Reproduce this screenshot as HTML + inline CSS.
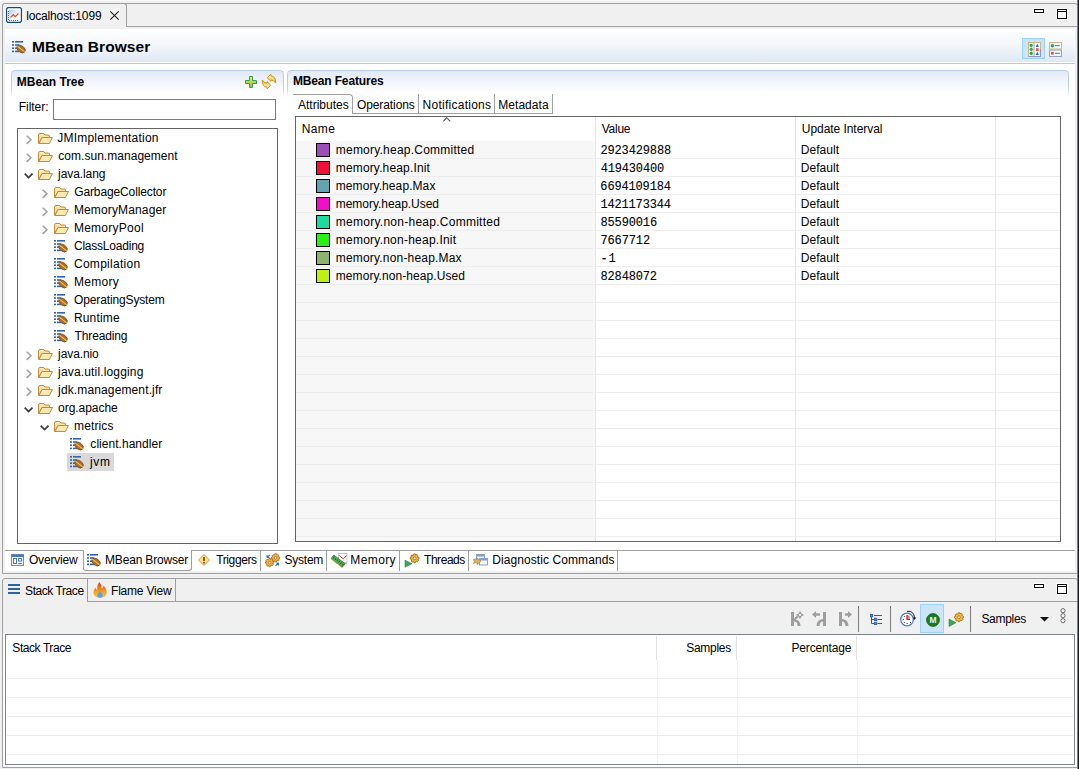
<!DOCTYPE html>
<html lang="en"><head><meta charset="utf-8"><title>JDK Mission Control - MBean Browser</title>
<style>
html,body{margin:0;padding:0}
body{width:1079px;height:769px;overflow:hidden;background:#f0f0f0;font-family:"Liberation Sans", sans-serif;font-size:12px;color:#000;position:relative}
.a{position:absolute;box-sizing:border-box;display:block}
.t{white-space:pre}
svg{overflow:visible}
</style></head><body>
<div class="a" style="left:0px;top:0px;width:1077px;height:1px;background:#fafafa"></div>
<div class="a" style="left:2px;top:3px;width:1076px;height:571px;border:1px solid #a0a0a0;border-radius:3px 3px 0 0;background:#f0f0f0"></div>
<div class="a" style="left:126px;top:26px;width:951px;height:1px;background:#a0a0a0"></div>
<div class="a" style="left:2px;top:3px;width:125px;height:24px;border:1px solid #a0a0a0;border-bottom:none;border-radius:3px 3px 0 0;background:#f1f1f1"></div>
<svg class="a" style="left:6px;top:7px" width="16" height="16" viewBox="0 0 16 16"><defs><linearGradient id="ci" x1="0" y1="0" x2="1" y2="1"><stop offset="0" stop-color="#a9cdf5"/><stop offset="0.6" stop-color="#ffffff"/></linearGradient></defs><path d="M1.8 0.6 H14.2 L15.4 1.8 V14.2 L14.2 15.4 H1.8 L0.6 14.2 V1.8 Z" fill="#fff" stroke="#0d4a8a" stroke-width="1.2"/><rect x="3" y="3" width="10.5" height="10.5" fill="url(#ci)"/><path d="M4.5 10.5 L7.3 7.6 L9.3 9.6 L12.5 6.5" fill="none" stroke="#ff3c14" stroke-width="1.25"/><path d="M2.5 4 V13" stroke="#2f7f88" stroke-width="1.1" stroke-dasharray="1 1"/><path d="M3 13.5 H13" stroke="#2f7f88" stroke-width="1" stroke-dasharray="1 1"/></svg>
<svg class="a" style="left:110px;top:11px" width="9" height="9" viewBox="0 0 9 9"><path d="M0.3 0.3 L8.7 8.7 M8.7 0.3 L0.3 8.7" stroke="#222" stroke-width="1.1" fill="none"/></svg>
<div class="a" style="left:1033px;top:8px;width:12px;height:6px;background:#fff"></div>
<div class="a" style="left:1034px;top:9px;width:10px;height:4px;border:1px solid #000;background:#fff"></div>
<div class="a" style="left:1056px;top:8px;width:12px;height:12px;background:#fff"></div>
<div class="a" style="left:1057px;top:9px;width:10px;height:10px;border:1px solid #000;background:#fff"></div>
<div class="a" style="left:1057px;top:11px;width:10px;height:1px;background:#000"></div>
<div class="a" style="left:5px;top:29px;width:1070px;height:542px;background:#fff"></div>
<div class="a" style="left:5px;top:29px;width:1070px;height:33px;background:linear-gradient(#ffffff 0%,#f4f7fc 45%,#e0e8f4 100%)"></div>
<div class="a" style="left:5px;top:63px;width:1070px;height:1px;background:#b4c9e2"></div>
<svg class="a" style="left:12px;top:41px" width="14" height="13" viewBox="0 0 14 13"><g fill="#2f66ad"><rect x="0" y="0" width="2" height="1.6"/><rect x="0" y="3.2" width="2" height="1.6"/><rect x="0" y="6.4" width="2" height="1.6"/><rect x="0" y="9.6" width="2" height="1.6"/><rect x="3" y="0" width="8" height="1.6"/><rect x="3" y="3.2" width="4" height="1.6"/><rect x="3" y="6.4" width="3" height="1.6"/><rect x="3" y="9.6" width="4" height="1.6"/></g><g transform="translate(9 8) rotate(38)"><ellipse cx="0" cy="0" rx="4.7" ry="3.2" fill="#b06c2c" stroke="#7d4a1c" stroke-width="0.8"/><path d="M-4.6 0 H4.6" stroke="#f2d24a" stroke-width="1"/></g></svg>
<div class="a" style="left:1022px;top:38px;width:23px;height:21px;background:#cce4f7;border:1px solid #99d1ff"></div>
<div class="a" style="left:11px;top:70px;width:273px;height:28px;border:1px solid #b8cde8;border-bottom:none;border-radius:4px 4px 0 0;background:linear-gradient(#e1e9f6 0%,#f3f6fb 45%,#ffffff 85%);-webkit-mask-image:linear-gradient(#000 55%,transparent 100%)"></div>
<div class="a" style="left:287px;top:70px;width:782px;height:28px;border:1px solid #b8cde8;border-bottom:none;border-radius:4px 4px 0 0;background:linear-gradient(#e1e9f6 0%,#f3f6fb 45%,#ffffff 85%);-webkit-mask-image:linear-gradient(#000 55%,transparent 100%)"></div>
<div class="a" style="left:53px;top:99px;width:223px;height:21px;border:1px solid #7a7a7a;background:#fff"></div>
<div class="a" style="left:17px;top:128px;width:261px;height:416px;border:1px solid #646464;background:#fff"></div>
<svg class="a" style="left:26px;top:135px" width="6" height="10" viewBox="0 0 6 10"><path d="M0.7 0.7 L4.9 4.8 L0.7 8.9" fill="none" stroke="#a0a0a0" stroke-width="1.6"/></svg>
<svg class="a" style="left:38px;top:133px" width="15" height="11" viewBox="0 0 15 11"><path d="M0.5 10.5 V2 Q0.5 0.5 2 0.5 H5 Q6.3 0.5 6.8 2 H10.5 Q11.5 2 11.5 3 V4.5 H4 L0.5 10.5 Z" fill="#fbe3a4" stroke="#c48a3a"/><path d="M1.5 1.8 H5.5" stroke="#fff8e0" stroke-width="1"/><path d="M0.8 10.5 L4 4.5 H14.5 L11.3 10.5 Z" fill="#fce9b4" stroke="#c48a3a" stroke-linejoin="round"/></svg>
<svg class="a" style="left:26px;top:153px" width="6" height="10" viewBox="0 0 6 10"><path d="M0.7 0.7 L4.9 4.8 L0.7 8.9" fill="none" stroke="#a0a0a0" stroke-width="1.6"/></svg>
<svg class="a" style="left:38px;top:151px" width="15" height="11" viewBox="0 0 15 11"><path d="M0.5 10.5 V2 Q0.5 0.5 2 0.5 H5 Q6.3 0.5 6.8 2 H10.5 Q11.5 2 11.5 3 V4.5 H4 L0.5 10.5 Z" fill="#fbe3a4" stroke="#c48a3a"/><path d="M1.5 1.8 H5.5" stroke="#fff8e0" stroke-width="1"/><path d="M0.8 10.5 L4 4.5 H14.5 L11.3 10.5 Z" fill="#fce9b4" stroke="#c48a3a" stroke-linejoin="round"/></svg>
<svg class="a" style="left:24px;top:173px" width="10" height="6" viewBox="0 0 10 6"><path d="M0.7 0.7 L4.6 4.6 L8.5 0.7" fill="none" stroke="#3a3a3a" stroke-width="1.7"/></svg>
<svg class="a" style="left:38px;top:169px" width="15" height="11" viewBox="0 0 15 11"><path d="M0.5 10.5 V2 Q0.5 0.5 2 0.5 H5 Q6.3 0.5 6.8 2 H10.5 Q11.5 2 11.5 3 V4.5 H4 L0.5 10.5 Z" fill="#fbe3a4" stroke="#c48a3a"/><path d="M1.5 1.8 H5.5" stroke="#fff8e0" stroke-width="1"/><path d="M0.8 10.5 L4 4.5 H14.5 L11.3 10.5 Z" fill="#fce9b4" stroke="#c48a3a" stroke-linejoin="round"/></svg>
<svg class="a" style="left:42px;top:189px" width="6" height="10" viewBox="0 0 6 10"><path d="M0.7 0.7 L4.9 4.8 L0.7 8.9" fill="none" stroke="#a0a0a0" stroke-width="1.6"/></svg>
<svg class="a" style="left:54px;top:187px" width="15" height="11" viewBox="0 0 15 11"><path d="M0.5 10.5 V2 Q0.5 0.5 2 0.5 H5 Q6.3 0.5 6.8 2 H10.5 Q11.5 2 11.5 3 V4.5 H4 L0.5 10.5 Z" fill="#fbe3a4" stroke="#c48a3a"/><path d="M1.5 1.8 H5.5" stroke="#fff8e0" stroke-width="1"/><path d="M0.8 10.5 L4 4.5 H14.5 L11.3 10.5 Z" fill="#fce9b4" stroke="#c48a3a" stroke-linejoin="round"/></svg>
<svg class="a" style="left:42px;top:207px" width="6" height="10" viewBox="0 0 6 10"><path d="M0.7 0.7 L4.9 4.8 L0.7 8.9" fill="none" stroke="#a0a0a0" stroke-width="1.6"/></svg>
<svg class="a" style="left:54px;top:205px" width="15" height="11" viewBox="0 0 15 11"><path d="M0.5 10.5 V2 Q0.5 0.5 2 0.5 H5 Q6.3 0.5 6.8 2 H10.5 Q11.5 2 11.5 3 V4.5 H4 L0.5 10.5 Z" fill="#fbe3a4" stroke="#c48a3a"/><path d="M1.5 1.8 H5.5" stroke="#fff8e0" stroke-width="1"/><path d="M0.8 10.5 L4 4.5 H14.5 L11.3 10.5 Z" fill="#fce9b4" stroke="#c48a3a" stroke-linejoin="round"/></svg>
<svg class="a" style="left:42px;top:225px" width="6" height="10" viewBox="0 0 6 10"><path d="M0.7 0.7 L4.9 4.8 L0.7 8.9" fill="none" stroke="#a0a0a0" stroke-width="1.6"/></svg>
<svg class="a" style="left:54px;top:223px" width="15" height="11" viewBox="0 0 15 11"><path d="M0.5 10.5 V2 Q0.5 0.5 2 0.5 H5 Q6.3 0.5 6.8 2 H10.5 Q11.5 2 11.5 3 V4.5 H4 L0.5 10.5 Z" fill="#fbe3a4" stroke="#c48a3a"/><path d="M1.5 1.8 H5.5" stroke="#fff8e0" stroke-width="1"/><path d="M0.8 10.5 L4 4.5 H14.5 L11.3 10.5 Z" fill="#fce9b4" stroke="#c48a3a" stroke-linejoin="round"/></svg>
<svg class="a" style="left:54px;top:240px" width="14" height="13" viewBox="0 0 14 13"><g fill="#2f66ad"><rect x="0" y="0" width="2" height="1.6"/><rect x="0" y="3.2" width="2" height="1.6"/><rect x="0" y="6.4" width="2" height="1.6"/><rect x="0" y="9.6" width="2" height="1.6"/><rect x="3" y="0" width="8" height="1.6"/><rect x="3" y="3.2" width="4" height="1.6"/><rect x="3" y="6.4" width="3" height="1.6"/><rect x="3" y="9.6" width="4" height="1.6"/></g><g transform="translate(9 8) rotate(38)"><ellipse cx="0" cy="0" rx="4.7" ry="3.2" fill="#b06c2c" stroke="#7d4a1c" stroke-width="0.8"/><path d="M-4.6 0 H4.6" stroke="#f2d24a" stroke-width="1"/></g></svg>
<svg class="a" style="left:54px;top:258px" width="14" height="13" viewBox="0 0 14 13"><g fill="#2f66ad"><rect x="0" y="0" width="2" height="1.6"/><rect x="0" y="3.2" width="2" height="1.6"/><rect x="0" y="6.4" width="2" height="1.6"/><rect x="0" y="9.6" width="2" height="1.6"/><rect x="3" y="0" width="8" height="1.6"/><rect x="3" y="3.2" width="4" height="1.6"/><rect x="3" y="6.4" width="3" height="1.6"/><rect x="3" y="9.6" width="4" height="1.6"/></g><g transform="translate(9 8) rotate(38)"><ellipse cx="0" cy="0" rx="4.7" ry="3.2" fill="#b06c2c" stroke="#7d4a1c" stroke-width="0.8"/><path d="M-4.6 0 H4.6" stroke="#f2d24a" stroke-width="1"/></g></svg>
<svg class="a" style="left:54px;top:276px" width="14" height="13" viewBox="0 0 14 13"><g fill="#2f66ad"><rect x="0" y="0" width="2" height="1.6"/><rect x="0" y="3.2" width="2" height="1.6"/><rect x="0" y="6.4" width="2" height="1.6"/><rect x="0" y="9.6" width="2" height="1.6"/><rect x="3" y="0" width="8" height="1.6"/><rect x="3" y="3.2" width="4" height="1.6"/><rect x="3" y="6.4" width="3" height="1.6"/><rect x="3" y="9.6" width="4" height="1.6"/></g><g transform="translate(9 8) rotate(38)"><ellipse cx="0" cy="0" rx="4.7" ry="3.2" fill="#b06c2c" stroke="#7d4a1c" stroke-width="0.8"/><path d="M-4.6 0 H4.6" stroke="#f2d24a" stroke-width="1"/></g></svg>
<svg class="a" style="left:54px;top:294px" width="14" height="13" viewBox="0 0 14 13"><g fill="#2f66ad"><rect x="0" y="0" width="2" height="1.6"/><rect x="0" y="3.2" width="2" height="1.6"/><rect x="0" y="6.4" width="2" height="1.6"/><rect x="0" y="9.6" width="2" height="1.6"/><rect x="3" y="0" width="8" height="1.6"/><rect x="3" y="3.2" width="4" height="1.6"/><rect x="3" y="6.4" width="3" height="1.6"/><rect x="3" y="9.6" width="4" height="1.6"/></g><g transform="translate(9 8) rotate(38)"><ellipse cx="0" cy="0" rx="4.7" ry="3.2" fill="#b06c2c" stroke="#7d4a1c" stroke-width="0.8"/><path d="M-4.6 0 H4.6" stroke="#f2d24a" stroke-width="1"/></g></svg>
<svg class="a" style="left:54px;top:312px" width="14" height="13" viewBox="0 0 14 13"><g fill="#2f66ad"><rect x="0" y="0" width="2" height="1.6"/><rect x="0" y="3.2" width="2" height="1.6"/><rect x="0" y="6.4" width="2" height="1.6"/><rect x="0" y="9.6" width="2" height="1.6"/><rect x="3" y="0" width="8" height="1.6"/><rect x="3" y="3.2" width="4" height="1.6"/><rect x="3" y="6.4" width="3" height="1.6"/><rect x="3" y="9.6" width="4" height="1.6"/></g><g transform="translate(9 8) rotate(38)"><ellipse cx="0" cy="0" rx="4.7" ry="3.2" fill="#b06c2c" stroke="#7d4a1c" stroke-width="0.8"/><path d="M-4.6 0 H4.6" stroke="#f2d24a" stroke-width="1"/></g></svg>
<svg class="a" style="left:54px;top:330px" width="14" height="13" viewBox="0 0 14 13"><g fill="#2f66ad"><rect x="0" y="0" width="2" height="1.6"/><rect x="0" y="3.2" width="2" height="1.6"/><rect x="0" y="6.4" width="2" height="1.6"/><rect x="0" y="9.6" width="2" height="1.6"/><rect x="3" y="0" width="8" height="1.6"/><rect x="3" y="3.2" width="4" height="1.6"/><rect x="3" y="6.4" width="3" height="1.6"/><rect x="3" y="9.6" width="4" height="1.6"/></g><g transform="translate(9 8) rotate(38)"><ellipse cx="0" cy="0" rx="4.7" ry="3.2" fill="#b06c2c" stroke="#7d4a1c" stroke-width="0.8"/><path d="M-4.6 0 H4.6" stroke="#f2d24a" stroke-width="1"/></g></svg>
<svg class="a" style="left:26px;top:351px" width="6" height="10" viewBox="0 0 6 10"><path d="M0.7 0.7 L4.9 4.8 L0.7 8.9" fill="none" stroke="#a0a0a0" stroke-width="1.6"/></svg>
<svg class="a" style="left:38px;top:349px" width="15" height="11" viewBox="0 0 15 11"><path d="M0.5 10.5 V2 Q0.5 0.5 2 0.5 H5 Q6.3 0.5 6.8 2 H10.5 Q11.5 2 11.5 3 V4.5 H4 L0.5 10.5 Z" fill="#fbe3a4" stroke="#c48a3a"/><path d="M1.5 1.8 H5.5" stroke="#fff8e0" stroke-width="1"/><path d="M0.8 10.5 L4 4.5 H14.5 L11.3 10.5 Z" fill="#fce9b4" stroke="#c48a3a" stroke-linejoin="round"/></svg>
<svg class="a" style="left:26px;top:369px" width="6" height="10" viewBox="0 0 6 10"><path d="M0.7 0.7 L4.9 4.8 L0.7 8.9" fill="none" stroke="#a0a0a0" stroke-width="1.6"/></svg>
<svg class="a" style="left:38px;top:367px" width="15" height="11" viewBox="0 0 15 11"><path d="M0.5 10.5 V2 Q0.5 0.5 2 0.5 H5 Q6.3 0.5 6.8 2 H10.5 Q11.5 2 11.5 3 V4.5 H4 L0.5 10.5 Z" fill="#fbe3a4" stroke="#c48a3a"/><path d="M1.5 1.8 H5.5" stroke="#fff8e0" stroke-width="1"/><path d="M0.8 10.5 L4 4.5 H14.5 L11.3 10.5 Z" fill="#fce9b4" stroke="#c48a3a" stroke-linejoin="round"/></svg>
<svg class="a" style="left:26px;top:387px" width="6" height="10" viewBox="0 0 6 10"><path d="M0.7 0.7 L4.9 4.8 L0.7 8.9" fill="none" stroke="#a0a0a0" stroke-width="1.6"/></svg>
<svg class="a" style="left:38px;top:385px" width="15" height="11" viewBox="0 0 15 11"><path d="M0.5 10.5 V2 Q0.5 0.5 2 0.5 H5 Q6.3 0.5 6.8 2 H10.5 Q11.5 2 11.5 3 V4.5 H4 L0.5 10.5 Z" fill="#fbe3a4" stroke="#c48a3a"/><path d="M1.5 1.8 H5.5" stroke="#fff8e0" stroke-width="1"/><path d="M0.8 10.5 L4 4.5 H14.5 L11.3 10.5 Z" fill="#fce9b4" stroke="#c48a3a" stroke-linejoin="round"/></svg>
<svg class="a" style="left:24px;top:407px" width="10" height="6" viewBox="0 0 10 6"><path d="M0.7 0.7 L4.6 4.6 L8.5 0.7" fill="none" stroke="#3a3a3a" stroke-width="1.7"/></svg>
<svg class="a" style="left:38px;top:403px" width="15" height="11" viewBox="0 0 15 11"><path d="M0.5 10.5 V2 Q0.5 0.5 2 0.5 H5 Q6.3 0.5 6.8 2 H10.5 Q11.5 2 11.5 3 V4.5 H4 L0.5 10.5 Z" fill="#fbe3a4" stroke="#c48a3a"/><path d="M1.5 1.8 H5.5" stroke="#fff8e0" stroke-width="1"/><path d="M0.8 10.5 L4 4.5 H14.5 L11.3 10.5 Z" fill="#fce9b4" stroke="#c48a3a" stroke-linejoin="round"/></svg>
<svg class="a" style="left:40px;top:425px" width="10" height="6" viewBox="0 0 10 6"><path d="M0.7 0.7 L4.6 4.6 L8.5 0.7" fill="none" stroke="#3a3a3a" stroke-width="1.7"/></svg>
<svg class="a" style="left:54px;top:421px" width="15" height="11" viewBox="0 0 15 11"><path d="M0.5 10.5 V2 Q0.5 0.5 2 0.5 H5 Q6.3 0.5 6.8 2 H10.5 Q11.5 2 11.5 3 V4.5 H4 L0.5 10.5 Z" fill="#fbe3a4" stroke="#c48a3a"/><path d="M1.5 1.8 H5.5" stroke="#fff8e0" stroke-width="1"/><path d="M0.8 10.5 L4 4.5 H14.5 L11.3 10.5 Z" fill="#fce9b4" stroke="#c48a3a" stroke-linejoin="round"/></svg>
<svg class="a" style="left:70px;top:438px" width="14" height="13" viewBox="0 0 14 13"><g fill="#2f66ad"><rect x="0" y="0" width="2" height="1.6"/><rect x="0" y="3.2" width="2" height="1.6"/><rect x="0" y="6.4" width="2" height="1.6"/><rect x="0" y="9.6" width="2" height="1.6"/><rect x="3" y="0" width="8" height="1.6"/><rect x="3" y="3.2" width="4" height="1.6"/><rect x="3" y="6.4" width="3" height="1.6"/><rect x="3" y="9.6" width="4" height="1.6"/></g><g transform="translate(9 8) rotate(38)"><ellipse cx="0" cy="0" rx="4.7" ry="3.2" fill="#b06c2c" stroke="#7d4a1c" stroke-width="0.8"/><path d="M-4.6 0 H4.6" stroke="#f2d24a" stroke-width="1"/></g></svg>
<div class="a" style="left:67px;top:453px;width:47px;height:18px;background:#d9d9d9"></div>
<svg class="a" style="left:70px;top:456px" width="14" height="13" viewBox="0 0 14 13"><g fill="#2f66ad"><rect x="0" y="0" width="2" height="1.6"/><rect x="0" y="3.2" width="2" height="1.6"/><rect x="0" y="6.4" width="2" height="1.6"/><rect x="0" y="9.6" width="2" height="1.6"/><rect x="3" y="0" width="8" height="1.6"/><rect x="3" y="3.2" width="4" height="1.6"/><rect x="3" y="6.4" width="3" height="1.6"/><rect x="3" y="9.6" width="4" height="1.6"/></g><g transform="translate(9 8) rotate(38)"><ellipse cx="0" cy="0" rx="4.7" ry="3.2" fill="#b06c2c" stroke="#7d4a1c" stroke-width="0.8"/><path d="M-4.6 0 H4.6" stroke="#f2d24a" stroke-width="1"/></g></svg>
<div class="a" style="left:293px;top:94px;width:60px;height:20px;border:1px solid #a0a0a0;border-bottom:none;border-left:none;border-radius:0 4px 0 0;background:#fff"></div>
<div class="a" style="left:352px;top:113px;width:201px;height:1px;background:#a0a0a0"></div>
<div class="a" style="left:418px;top:94px;width:1px;height:20px;background:#a0a0a0"></div>
<div class="a" style="left:494px;top:94px;width:1px;height:20px;background:#a0a0a0"></div>
<div class="a" style="left:552px;top:94px;width:1px;height:20px;background:#a0a0a0"></div>
<div class="a" style="left:295px;top:116px;width:766px;height:426px;border:1px solid #646464;background:#fff"></div>
<div class="a" style="left:296px;top:141px;width:299px;height:400px;background:#f7f7f7"></div>
<div class="a" style="left:595px;top:117px;width:1px;height:424px;background:#e6e6e6"></div>
<div class="a" style="left:795px;top:117px;width:1px;height:424px;background:#e6e6e6"></div>
<div class="a" style="left:995px;top:117px;width:1px;height:424px;background:#e6e6e6"></div>
<div class="a" style="left:296px;top:158px;width:764px;height:1px;background:#ededed"></div>
<div class="a" style="left:296px;top:176px;width:764px;height:1px;background:#ededed"></div>
<div class="a" style="left:296px;top:194px;width:764px;height:1px;background:#ededed"></div>
<div class="a" style="left:296px;top:212px;width:764px;height:1px;background:#ededed"></div>
<div class="a" style="left:296px;top:230px;width:764px;height:1px;background:#ededed"></div>
<div class="a" style="left:296px;top:248px;width:764px;height:1px;background:#ededed"></div>
<div class="a" style="left:296px;top:266px;width:764px;height:1px;background:#ededed"></div>
<div class="a" style="left:296px;top:284px;width:764px;height:1px;background:#ededed"></div>
<div class="a" style="left:296px;top:302px;width:764px;height:1px;background:#ededed"></div>
<div class="a" style="left:296px;top:320px;width:764px;height:1px;background:#ededed"></div>
<div class="a" style="left:296px;top:338px;width:764px;height:1px;background:#ededed"></div>
<div class="a" style="left:296px;top:356px;width:764px;height:1px;background:#ededed"></div>
<div class="a" style="left:296px;top:374px;width:764px;height:1px;background:#ededed"></div>
<div class="a" style="left:296px;top:392px;width:764px;height:1px;background:#ededed"></div>
<div class="a" style="left:296px;top:410px;width:764px;height:1px;background:#ededed"></div>
<div class="a" style="left:296px;top:428px;width:764px;height:1px;background:#ededed"></div>
<div class="a" style="left:296px;top:446px;width:764px;height:1px;background:#ededed"></div>
<div class="a" style="left:296px;top:464px;width:764px;height:1px;background:#ededed"></div>
<div class="a" style="left:296px;top:482px;width:764px;height:1px;background:#ededed"></div>
<div class="a" style="left:296px;top:500px;width:764px;height:1px;background:#ededed"></div>
<div class="a" style="left:296px;top:518px;width:764px;height:1px;background:#ededed"></div>
<div class="a" style="left:296px;top:536px;width:764px;height:1px;background:#ededed"></div>
<svg class="a" style="left:443px;top:117px" width="8" height="5" viewBox="0 0 8 5"><path d="M0.3 4.3 L3.75 0.7 L7.2 4.3" fill="none" stroke="#555" stroke-width="1.1"/></svg>
<div class="a" style="left:316px;top:143px;width:14px;height:14px;background:#9b4fb4;border:1px solid #000"></div>
<div class="a" style="left:316px;top:161px;width:14px;height:14px;background:#f0103a;border:1px solid #000"></div>
<div class="a" style="left:316px;top:179px;width:14px;height:14px;background:#62a5b0;border:1px solid #000"></div>
<div class="a" style="left:316px;top:197px;width:14px;height:14px;background:#f010c8;border:1px solid #000"></div>
<div class="a" style="left:316px;top:215px;width:14px;height:14px;background:#1edca0;border:1px solid #000"></div>
<div class="a" style="left:316px;top:233px;width:14px;height:14px;background:#28f014;border:1px solid #000"></div>
<div class="a" style="left:316px;top:251px;width:14px;height:14px;background:#8cb46e;border:1px solid #000"></div>
<div class="a" style="left:316px;top:269px;width:14px;height:14px;background:#bef014;border:1px solid #000"></div>
<div class="a" style="left:5px;top:550px;width:1070px;height:1px;background:#a0a0a0"></div>
<div class="a" style="left:83px;top:550px;width:109px;height:21px;background:#fff;border:1px solid #a0a0a0;border-top:none;border-radius:0 0 3px 3px"></div>
<div class="a" style="left:260px;top:551px;width:1px;height:20px;background:#a0a0a0"></div>
<div class="a" style="left:326px;top:551px;width:1px;height:20px;background:#a0a0a0"></div>
<div class="a" style="left:399px;top:551px;width:1px;height:20px;background:#a0a0a0"></div>
<div class="a" style="left:468px;top:551px;width:1px;height:20px;background:#a0a0a0"></div>
<div class="a" style="left:617px;top:551px;width:1px;height:20px;background:#a0a0a0"></div>
<div class="a" style="left:2px;top:578px;width:1076px;height:190px;border:1px solid #a0a0a0;border-radius:3px 3px 0 0;background:#f0f0f0"></div>
<div class="a" style="left:87px;top:601px;width:990px;height:1px;background:#a0a0a0"></div>
<div class="a" style="left:87px;top:579px;width:1px;height:23px;background:#a0a0a0"></div>
<div class="a" style="left:175px;top:579px;width:1px;height:22px;background:#a0a0a0"></div>
<div class="a" style="left:1033px;top:583px;width:12px;height:6px;background:#fff"></div>
<div class="a" style="left:1034px;top:584px;width:10px;height:4px;border:1px solid #000;background:#fff"></div>
<div class="a" style="left:1056px;top:583px;width:12px;height:12px;background:#fff"></div>
<div class="a" style="left:1057px;top:584px;width:10px;height:10px;border:1px solid #000;background:#fff"></div>
<div class="a" style="left:1057px;top:586px;width:10px;height:1px;background:#000"></div>
<svg class="a" style="left:8px;top:584px" width="12" height="10" viewBox="0 0 12 10"><g fill="#2b63a5"><rect x="0" y="0" width="12" height="2"/><rect x="0" y="4" width="12" height="2"/><rect x="0" y="8" width="12" height="2"/></g></svg>
<div class="a" style="left:3px;top:634px;width:1074px;height:133px;background:#fbfbfb"></div>
<div class="a" style="left:5px;top:634px;width:1070px;height:131px;border:1px solid #80848c;background:#fff"></div>
<div class="a" style="left:656px;top:636px;width:1px;height:24px;background:#e2e2e2"></div>
<div class="a" style="left:657px;top:660px;width:1px;height:104px;background:#f0f0f0"></div>
<div class="a" style="left:736px;top:636px;width:1px;height:24px;background:#e2e2e2"></div>
<div class="a" style="left:737px;top:660px;width:1px;height:104px;background:#f0f0f0"></div>
<div class="a" style="left:856px;top:636px;width:1px;height:24px;background:#e2e2e2"></div>
<div class="a" style="left:857px;top:660px;width:1px;height:104px;background:#f0f0f0"></div>
<div class="a" style="left:7px;top:678px;width:1066px;height:1px;background:#ededed"></div>
<div class="a" style="left:7px;top:697px;width:1066px;height:1px;background:#ededed"></div>
<div class="a" style="left:7px;top:716px;width:1066px;height:1px;background:#ededed"></div>
<div class="a" style="left:7px;top:735px;width:1066px;height:1px;background:#ededed"></div>
<div class="a" style="left:7px;top:754px;width:1066px;height:1px;background:#ededed"></div>
<svg class="a" style="left:791px;top:611px" width="13" height="15" viewBox="0 0 13 15"><path d="M0 1 H3 V7.4 L6.2 4.6 L7.6 6.2 L4.6 8.4 Q9.2 9 9.6 15 H6.6 Q6.4 10.6 3 10.6 V15 H0 Z" fill="#9e9e9e"/><path d="M9 -0.2 L10.5 2.5 L13.2 4 L10.5 5.5 L9 8.2 L7.5 5.5 L4.8 4 L7.5 2.5 Z" fill="#9e9e9e"/><circle cx="9" cy="4" r="1.15" fill="#f0f0f0"/></svg>
<svg class="a" style="left:812px;top:611px" width="14" height="15" viewBox="0 0 14 15"><path d="M14 1 H11 V8 Q5 8 4.5 15 H7.5 Q7.7 10.5 11 10.5 V15 H14 Z" fill="#9e9e9e"/><path d="M0 3.5 L4 0 V2.2 H8 V4.8 H4 V7 Z" fill="#9e9e9e"/></svg>
<svg class="a" style="left:839px;top:611px" width="13" height="15" viewBox="0 0 13 15"><path d="M0 1 H3 V8 Q9 8 9.5 15 H6.5 Q6.3 10.5 3 10.5 V15 H0 Z" fill="#9e9e9e"/><path d="M13 3.5 L9 0 V2.2 H6 V4.8 H9 V7 Z" fill="#9e9e9e"/></svg>
<div class="a" style="left:858px;top:606px;width:1px;height:26px;background:#7d7d7d"></div>
<div class="a" style="left:890px;top:606px;width:1px;height:26px;background:#7d7d7d"></div>
<div class="a" style="left:970px;top:606px;width:1px;height:26px;background:#7d7d7d"></div>
<svg class="a" style="left:870px;top:614px" width="12" height="12" viewBox="0 0 12 12"><path d="M1.5 2 V9.5 H4 M1.5 5.5 H4" fill="none" stroke="#555" stroke-width="1"/><path d="M4 1.5 H12 M7.5 5.5 H12 M7.5 9.5 H12" stroke="#555" stroke-width="1"/><g fill="#5b87c5" stroke="#2f5fa3" stroke-width="0.8"><rect x="0.4" y="0.4" width="2.4" height="2.4"/><rect x="4.4" y="4.2" width="2.4" height="2.4"/><rect x="4.4" y="8.2" width="2.4" height="2.4"/></g></svg>
<svg class="a" style="left:900px;top:610px" width="17" height="17" viewBox="0 0 17 17"><circle cx="7" cy="9.5" r="6.3" fill="#fff" stroke="#4a7fc4" stroke-width="1.3"/><path d="M7 9.5 V5.5 H9.8 V9.5 Z" fill="#f08080"/><path d="M7 5 V9.5 H10" fill="none" stroke="#c02020" stroke-width="1.2"/><g fill="#333"><rect x="6.6" y="13" width="1" height="1"/><rect x="2.8" y="9" width="1" height="1"/><rect x="3.8" y="6" width="1" height="1"/><rect x="3.8" y="12" width="1" height="1"/><rect x="10" y="12" width="1" height="1"/></g><path d="M7 1.3 Q14 0.5 14.5 8" fill="none" stroke="#222" stroke-width="1"/><path d="M12.6 7.5 H16.4 L14.5 10 Z" fill="#222"/></svg>
<div class="a" style="left:920px;top:604px;width:24px;height:29px;background:#cce4f7;border:1px solid #99d1ff"></div>
<svg class="a" style="left:926px;top:613px" width="14" height="14" viewBox="0 0 14 14"><circle cx="7" cy="7" r="6.4" fill="#1c7c1c" stroke="#0d5a0d" stroke-width="0.8"/><text x="7" y="10" text-anchor="middle" font-family="Liberation Sans, sans-serif" font-size="8.5" font-weight="700" fill="#e8f5e8">M</text></svg>
<svg class="a" style="left:949px;top:612px" width="16" height="15" viewBox="0 0 16 15"><path d="M0 7 L7 10.7 L0 14.5 Z" fill="#3fa45a" stroke="#2a8a45" stroke-width="0.6"/><g transform="translate(10 5.2) scale(0.9)"><path d="M-0.9 -5 H0.9 L1.2 -3.6 L2.6 -4.4 L3.9 -3.1 L3.1 -1.8 L5 -0.9 V0.9 L3.6 1.2 L4.4 2.6 L3.1 3.9 L1.8 3.1 L0.9 5 H-0.9 L-1.2 3.6 L-2.6 4.4 L-3.9 3.1 L-3.1 1.8 L-5 0.9 V-0.9 L-3.6 -1.2 L-4.4 -2.6 L-3.1 -3.9 L-1.8 -3.1 Z" fill="#f3b53f" stroke="#a0640f" stroke-width="0.8"/><circle r="1.5" fill="#fff6dc" stroke="#a0640f" stroke-width="0.8"/></g></svg>
<svg class="a" style="left:1040px;top:617px" width="9" height="5" viewBox="0 0 9 5"><path d="M0 0 H9 L4.5 4.6 Z" fill="#111"/></svg>
<svg class="a" style="left:1060px;top:608px" width="6" height="16" viewBox="0 0 6 16"><g fill="#f8f8f8" stroke="#6a6a6a" stroke-width="1"><circle cx="3" cy="2.7" r="2.1"/><circle cx="3" cy="7.7" r="2.1"/><circle cx="3" cy="12.7" r="2.1"/></g></svg>
<svg class="a" style="left:245px;top:76px" width="12" height="12" viewBox="0 0 12 12"><defs><linearGradient id="gp" x1="0" y1="0" x2="0" y2="1"><stop offset="0" stop-color="#e6ee5a"/><stop offset="1" stop-color="#8bc34a"/></linearGradient></defs><path d="M4.5 0.5 H7.5 V4.5 H11.5 V7.5 H7.5 V11.5 H4.5 V7.5 H0.5 V4.5 H4.5 Z" fill="url(#gp)" stroke="#3a9a5c" stroke-width="1"/></svg>
<svg class="a" style="left:262px;top:74px" width="15" height="15" viewBox="0 0 15 15"><defs><linearGradient id="gr" x1="0" y1="0" x2="0" y2="1"><stop offset="0" stop-color="#fff3c0"/><stop offset="1" stop-color="#f3bd3c"/></linearGradient></defs><g fill="url(#gr)" stroke="#c48a12" stroke-width="0.9" stroke-linejoin="round"><path d="M5.2 3.7 L8.9 0.2 L9 1.9 Q13.7 2 13.8 9 Q11.6 6 9 5.9 L8.9 7.3 Z"/><path transform="rotate(180 7 7.5)" d="M5.2 3.7 L8.9 0.2 L9 1.9 Q13.7 2 13.8 9 Q11.6 6 9 5.9 L8.9 7.3 Z"/></g></svg>
<svg class="a" style="left:1028px;top:42px" width="13" height="15" viewBox="0 0 13 15"><rect x="0.5" y="0.5" width="12" height="14" fill="#f2fbff" stroke="#c9b88a"/><path d="M0.5 14.5 H12.5 V7" fill="none" stroke="#8e97b8"/><path d="M6 1 V14" stroke="#b9ad8c"/><g fill="#3aa655" stroke="#2c8a45" stroke-width="0.5"><circle cx="3.2" cy="3.5" r="1.4"/><circle cx="3.2" cy="7.5" r="1.4"/><circle cx="3.2" cy="11.5" r="1.4"/></g><path d="M7.6 5 L9.3 1.8 L11 5 Z M7.6 13 L9.3 9.8 L11 13 Z" fill="#2f6fc0"/><rect x="7.9" y="6.2" width="2.8" height="2.8" fill="#e8564a"/></svg>
<svg class="a" style="left:1049px;top:42px" width="13" height="15" viewBox="0 0 13 15"><rect x="0.5" y="0.5" width="12" height="6.5" fill="#f2fbff" stroke="#c9b88a"/><rect x="0.5" y="8" width="12" height="6.5" fill="#f2fbff" stroke="#9aa2bd"/><circle cx="3.4" cy="3.7" r="1.5" fill="#3aa655" stroke="#2c8a45" stroke-width="0.5"/><rect x="2" y="9.8" width="2.8" height="2.8" fill="#e8564a"/><path d="M6 3.7 H10.8 M6 11.3 H10.8" stroke="#5a6aa0" stroke-width="1"/></svg>
<svg class="a" style="left:11px;top:554px" width="13" height="12" viewBox="0 0 13 12"><rect x="0.5" y="0.5" width="12" height="11" fill="#f4f8fd" stroke="#6a8cc0"/><rect x="0.5" y="0.5" width="12" height="2.5" fill="#4a78b8"/><rect x="2.5" y="4.5" width="3" height="5" fill="#fff" stroke="#4a78b8"/><rect x="7.5" y="4.5" width="3" height="2.6" fill="#fff" stroke="#4a78b8"/><path d="M7 9.5 H11" stroke="#4a78b8"/></svg>
<svg class="a" style="left:87px;top:554px" width="14" height="13" viewBox="0 0 14 13"><g fill="#2f66ad"><rect x="0" y="0" width="2" height="1.6"/><rect x="0" y="3.2" width="2" height="1.6"/><rect x="0" y="6.4" width="2" height="1.6"/><rect x="0" y="9.6" width="2" height="1.6"/><rect x="3" y="0" width="8" height="1.6"/><rect x="3" y="3.2" width="4" height="1.6"/><rect x="3" y="6.4" width="3" height="1.6"/><rect x="3" y="9.6" width="4" height="1.6"/></g><g transform="translate(9 8) rotate(38)"><ellipse cx="0" cy="0" rx="4.7" ry="3.2" fill="#b06c2c" stroke="#7d4a1c" stroke-width="0.8"/><path d="M-4.6 0 H4.6" stroke="#f2d24a" stroke-width="1"/></g></svg>
<svg class="a" style="left:198px;top:554px" width="12" height="12" viewBox="0 0 12 12"><path d="M6 0.5 L11.5 6 L6 11.5 L0.5 6 Z" fill="#ffe08a" stroke="#e39a2d" stroke-width="1"/><path d="M6 3 V7" stroke="#5a3a10" stroke-width="1.6"/><rect x="5.2" y="8" width="1.6" height="1.5" fill="#5a3a10"/></svg>
<svg class="a" style="left:265px;top:553px" width="16" height="15" viewBox="0 0 16 15"><g transform="translate(4.6 9.6) scale(0.82)"><path d="M-0.9 -5 H0.9 L1.2 -3.6 L2.6 -4.4 L3.9 -3.1 L3.1 -1.8 L5 -0.9 V0.9 L3.6 1.2 L4.4 2.6 L3.1 3.9 L1.8 3.1 L0.9 5 H-0.9 L-1.2 3.6 L-2.6 4.4 L-3.9 3.1 L-3.1 1.8 L-5 0.9 V-0.9 L-3.6 -1.2 L-4.4 -2.6 L-3.1 -3.9 L-1.8 -3.1 Z" fill="#f3b53f" stroke="#9a5f10" stroke-width="0.9"/><circle r="1.6" fill="#fff6dc" stroke="#9a5f10" stroke-width="0.8"/></g><g transform="translate(10.6 4.8) scale(0.82)"><path d="M-0.9 -5 H0.9 L1.2 -3.6 L2.6 -4.4 L3.9 -3.1 L3.1 -1.8 L5 -0.9 V0.9 L3.6 1.2 L4.4 2.6 L3.1 3.9 L1.8 3.1 L0.9 5 H-0.9 L-1.2 3.6 L-2.6 4.4 L-3.9 3.1 L-3.1 1.8 L-5 0.9 V-0.9 L-3.6 -1.2 L-4.4 -2.6 L-3.1 -3.9 L-1.8 -3.1 Z" fill="#f3b53f" stroke="#9a5f10" stroke-width="0.9"/><circle r="1.6" fill="#fff6dc" stroke="#9a5f10" stroke-width="0.8"/></g><path d="M2 4.5 L5 1.8 M2 4.5 V2 M2 4.5 H4.4" stroke="#2f6fc0" stroke-width="1.1" fill="none"/><path d="M13.5 10 L10.5 12.8 M13.5 10 V12.4 M13.5 10 H11.2" stroke="#2f6fc0" stroke-width="1.1" fill="none"/></svg>
<svg class="a" style="left:331px;top:553px" width="16" height="15" viewBox="0 0 16 15"><rect x="7.5" y="0.5" width="8.5" height="9" fill="#fff" stroke="#b8b8b8" stroke-width="0.8"/><path d="M8 2.2 L10 4.2 L12.3 5.8 L15.6 2.6" fill="none" stroke="#d0342c" stroke-width="1"/><path d="M9 10.6 H16" stroke="#aaa" stroke-width="0.8"/><g transform="translate(2.8 2) rotate(38)"><rect x="0" y="0" width="14.2" height="4.4" fill="#5db85b" stroke="#2e7d32" stroke-width="0.8"/><path d="M1.5 0.9 V3.2 M3.8 0.9 V3.2 M6.1 0.9 V3.2 M8.4 0.9 V3.2 M10.7 0.9 V3.2 M13 0.9 V3.2" stroke="#1b5e20" stroke-width="1"/><path d="M0.5 4.8 H13.8" stroke="#d4b13a" stroke-width="0.9"/></g></svg>
<svg class="a" style="left:405px;top:553px" width="16" height="15" viewBox="0 0 16 15"><path d="M0 7.2 L7 10.7 L0 14.2 Z" fill="#3fa45a" stroke="#2a8a45" stroke-width="0.6"/><g transform="translate(9.6 5.3) scale(0.88)"><path d="M-0.9 -5 H0.9 L1.2 -3.6 L2.6 -4.4 L3.9 -3.1 L3.1 -1.8 L5 -0.9 V0.9 L3.6 1.2 L4.4 2.6 L3.1 3.9 L1.8 3.1 L0.9 5 H-0.9 L-1.2 3.6 L-2.6 4.4 L-3.9 3.1 L-3.1 1.8 L-5 0.9 V-0.9 L-3.6 -1.2 L-4.4 -2.6 L-3.1 -3.9 L-1.8 -3.1 Z" fill="#f3b53f" stroke="#9a5f10" stroke-width="0.9"/><circle r="1.6" fill="#fff6dc" stroke="#9a5f10" stroke-width="0.8"/></g></svg>
<svg class="a" style="left:473px;top:554px" width="15" height="12" viewBox="0 0 15 12"><rect x="3.5" y="0.5" width="8" height="6" fill="#eef3fb" stroke="#8aa4cf"/><rect x="3.5" y="0.5" width="8" height="2" fill="#7f9fd0"/><rect x="6.5" y="4.5" width="8" height="6.5" fill="#f6f9fe" stroke="#8aa4cf"/><rect x="6.5" y="4.5" width="8" height="2" fill="#7f9fd0"/><path d="M0.5 5.5 Q2.5 4 4 5.6 L4 4 L8 7 L4 10.5 L4 8.6 Q2 8.4 0.5 9.5 Q2 7.5 0.5 5.5 Z" fill="#d9b36a" stroke="#a8843c" stroke-width="0.7"/></svg>
<svg class="a" style="left:93px;top:582px" width="14" height="16" viewBox="0 0 14 16"><defs><linearGradient id="fl" x1="0" y1="0" x2="0" y2="1"><stop offset="0" stop-color="#e8391d"/><stop offset="0.55" stop-color="#f7941d"/><stop offset="1" stop-color="#fbd13a"/></linearGradient></defs><path d="M6.5 0 Q9 3.2 8.6 6.5 Q10.6 5.6 10.6 3.4 Q14 7.5 13.6 11 Q13 15.6 7 15.8 Q1 15.6 0.4 11 Q0.2 8 2.6 5.6 Q2.8 7.6 4.2 8.2 Q3.6 3.6 6.5 0 Z" fill="url(#fl)"/><path d="M7 9.5 Q10.4 12 9.6 14.2 Q8.8 15.7 7 15.7 Q5.2 15.7 4.4 14.2 Q3.8 12 7 9.5 Z" fill="#5aa0e6"/></svg>
<div class="a" style="left:1077px;top:0px;width:1px;height:769px;background:#7b7e82"></div>
<div class="a" style="left:1078px;top:0px;width:1px;height:769px;background:#1a1f27"></div>
<span class="a t" style='left:26.19px;top:7px;line-height:18px;font-size:12px;letter-spacing:-0.153px;'>localhost:1099</span>
<span class="a t" style='left:31.96px;top:36px;line-height:22px;font-size:15.5px;letter-spacing:0.105px;font-weight:700;'>MBean Browser</span>
<span class="a t" style='left:16.80px;top:73px;line-height:18px;font-size:12px;letter-spacing:0.008px;font-weight:700;'>MBean Tree</span>
<span class="a t" style='left:292.90px;top:72px;line-height:18px;font-size:12px;letter-spacing:-0.146px;font-weight:700;'>MBean Features</span>
<span class="a t" style='left:18.72px;top:98px;line-height:18px;font-size:12px;letter-spacing:-0.033px;'>Filter:</span>
<span class="a t" style='left:57.25px;top:129px;line-height:18px;font-size:12px;letter-spacing:0.214px;'>JMImplementation</span>
<span class="a t" style='left:58.25px;top:147px;line-height:18px;font-size:12px;letter-spacing:0.038px;'>com.sun.management</span>
<span class="a t" style='left:58.09px;top:165px;line-height:18px;font-size:12px;letter-spacing:-0.089px;'>java.lang</span>
<span class="a t" style='left:74.26px;top:183px;line-height:18px;font-size:12px;letter-spacing:-0.128px;'>GarbageCollector</span>
<span class="a t" style='left:73.92px;top:201px;line-height:18px;font-size:12px;letter-spacing:0.137px;'>MemoryManager</span>
<span class="a t" style='left:73.92px;top:219px;line-height:18px;font-size:12px;letter-spacing:0.255px;'>MemoryPool</span>
<span class="a t" style='left:73.96px;top:237px;line-height:18px;font-size:12px;letter-spacing:-0.219px;'>ClassLoading</span>
<span class="a t" style='left:73.96px;top:255px;line-height:18px;font-size:12px;letter-spacing:0.282px;'>Compilation</span>
<span class="a t" style='left:73.92px;top:273px;line-height:18px;font-size:12px;letter-spacing:0.323px;'>Memory</span>
<span class="a t" style='left:74.00px;top:291px;line-height:18px;font-size:12px;letter-spacing:-0.132px;'>OperatingSystem</span>
<span class="a t" style='left:73.92px;top:309px;line-height:18px;font-size:12px;letter-spacing:0.181px;'>Runtime</span>
<span class="a t" style='left:74.62px;top:327px;line-height:18px;font-size:12px;letter-spacing:-0.154px;'>Threading</span>
<span class="a t" style='left:58.09px;top:345px;line-height:18px;font-size:12px;letter-spacing:-0.095px;'>java.nio</span>
<span class="a t" style='left:58.09px;top:363px;line-height:18px;font-size:12px;letter-spacing:0.160px;'>java.util.logging</span>
<span class="a t" style='left:58.09px;top:381px;line-height:18px;font-size:12px;letter-spacing:0.132px;'>jdk.management.jfr</span>
<span class="a t" style='left:58.06px;top:399px;line-height:18px;font-size:12px;letter-spacing:-0.034px;'>org.apache</span>
<span class="a t" style='left:74.08px;top:417px;line-height:18px;font-size:12px;letter-spacing:0.115px;'>metrics</span>
<span class="a t" style='left:90.35px;top:435px;line-height:18px;font-size:12px;letter-spacing:0.035px;'>client.handler</span>
<span class="a t" style='left:89.99px;top:453px;line-height:18px;font-size:12px;letter-spacing:0.700px;'>jvm</span>
<span class="a t" style='left:297.96px;top:96px;line-height:18px;font-size:12px;letter-spacing:0.012px;'>Attributes</span>
<span class="a t" style='left:357.00px;top:96px;line-height:18px;font-size:12px;letter-spacing:-0.103px;'>Operations</span>
<span class="a t" style='left:422.52px;top:96px;line-height:18px;font-size:12px;letter-spacing:0.264px;'>Notifications</span>
<span class="a t" style='left:498.32px;top:96px;line-height:18px;font-size:12px;letter-spacing:0.031px;'>Metadata</span>
<span class="a t" style='left:301.72px;top:120px;line-height:18px;font-size:12px;letter-spacing:0.380px;'>Name</span>
<span class="a t" style='left:601.75px;top:120px;line-height:18px;font-size:12px;letter-spacing:-0.273px;'>Value</span>
<span class="a t" style='left:801.78px;top:120px;line-height:18px;font-size:12px;letter-spacing:-0.048px;'>Update Interval</span>
<span class="a t" style='left:335.78px;top:141px;line-height:18px;font-size:12px;letter-spacing:0.225px;'>memory.heap.Committed</span>
<span class="a t" style='left:600.44px;top:142px;line-height:18px;font-size:12px;letter-spacing:-0.139px;font-family:"Liberation Mono", monospace;-webkit-text-stroke:0.1px #000;'>2923429888</span>
<span class="a t" style='left:800.82px;top:141px;line-height:18px;font-size:12px;letter-spacing:0.024px;'>Default</span>
<span class="a t" style='left:335.78px;top:159px;line-height:18px;font-size:12px;letter-spacing:0.154px;'>memory.heap.Init</span>
<span class="a t" style='left:600.68px;top:160px;line-height:18px;font-size:12px;letter-spacing:-0.163px;font-family:"Liberation Mono", monospace;-webkit-text-stroke:0.1px #000;'>419430400</span>
<span class="a t" style='left:800.82px;top:159px;line-height:18px;font-size:12px;letter-spacing:0.024px;'>Default</span>
<span class="a t" style='left:335.78px;top:177px;line-height:18px;font-size:12px;letter-spacing:0.081px;'>memory.heap.Max</span>
<span class="a t" style='left:600.37px;top:178px;line-height:18px;font-size:12px;letter-spacing:-0.157px;font-family:"Liberation Mono", monospace;-webkit-text-stroke:0.1px #000;'>6694109184</span>
<span class="a t" style='left:800.82px;top:177px;line-height:18px;font-size:12px;letter-spacing:0.024px;'>Default</span>
<span class="a t" style='left:335.78px;top:195px;line-height:18px;font-size:12px;letter-spacing:-0.040px;'>memory.heap.Used</span>
<span class="a t" style='left:600.43px;top:196px;line-height:18px;font-size:12px;letter-spacing:-0.163px;font-family:"Liberation Mono", monospace;-webkit-text-stroke:0.1px #000;'>1421173344</span>
<span class="a t" style='left:800.82px;top:195px;line-height:18px;font-size:12px;letter-spacing:0.024px;'>Default</span>
<span class="a t" style='left:335.78px;top:213px;line-height:18px;font-size:12px;letter-spacing:0.263px;'>memory.non-heap.Committed</span>
<span class="a t" style='left:600.48px;top:214px;line-height:18px;font-size:12px;letter-spacing:-0.143px;font-family:"Liberation Mono", monospace;-webkit-text-stroke:0.1px #000;'>85590016</span>
<span class="a t" style='left:800.82px;top:213px;line-height:18px;font-size:12px;letter-spacing:0.024px;'>Default</span>
<span class="a t" style='left:335.78px;top:231px;line-height:18px;font-size:12px;letter-spacing:0.237px;'>memory.non-heap.Init</span>
<span class="a t" style='left:600.38px;top:232px;line-height:18px;font-size:12px;letter-spacing:-0.112px;font-family:"Liberation Mono", monospace;-webkit-text-stroke:0.1px #000;'>7667712</span>
<span class="a t" style='left:800.82px;top:231px;line-height:18px;font-size:12px;letter-spacing:0.024px;'>Default</span>
<span class="a t" style='left:335.78px;top:249px;line-height:18px;font-size:12px;letter-spacing:0.185px;'>memory.non-heap.Max</span>
<span class="a t" style='left:600.54px;top:250px;line-height:18px;font-size:12px;letter-spacing:0.700px;font-family:"Liberation Mono", monospace;-webkit-text-stroke:0.1px #000;'>-1</span>
<span class="a t" style='left:800.82px;top:249px;line-height:18px;font-size:12px;letter-spacing:0.024px;'>Default</span>
<span class="a t" style='left:335.78px;top:267px;line-height:18px;font-size:12px;letter-spacing:0.069px;'>memory.non-heap.Used</span>
<span class="a t" style='left:600.48px;top:268px;line-height:18px;font-size:12px;letter-spacing:-0.145px;font-family:"Liberation Mono", monospace;-webkit-text-stroke:0.1px #000;'>82848072</span>
<span class="a t" style='left:800.82px;top:267px;line-height:18px;font-size:12px;letter-spacing:0.024px;'>Default</span>
<span class="a t" style='left:28.90px;top:551px;line-height:18px;font-size:12px;letter-spacing:-0.171px;'>Overview</span>
<span class="a t" style='left:105.02px;top:551px;line-height:18px;font-size:12px;letter-spacing:-0.172px;'>MBean Browser</span>
<span class="a t" style='left:216.22px;top:551px;line-height:18px;font-size:12px;letter-spacing:-0.391px;'>Triggers</span>
<span class="a t" style='left:284.61px;top:551px;line-height:18px;font-size:12px;letter-spacing:-0.263px;'>System</span>
<span class="a t" style='left:350.32px;top:551px;line-height:18px;font-size:12px;letter-spacing:0.383px;'>Memory</span>
<span class="a t" style='left:424.02px;top:551px;line-height:18px;font-size:12px;letter-spacing:-0.449px;'>Threads</span>
<span class="a t" style='left:492.32px;top:551px;line-height:18px;font-size:12px;letter-spacing:0.075px;'>Diagnostic Commands</span>
<span class="a t" style='left:25.11px;top:582px;line-height:18px;font-size:12px;letter-spacing:-0.441px;'>Stack Trace</span>
<span class="a t" style='left:111.02px;top:582px;line-height:18px;font-size:12px;letter-spacing:-0.204px;'>Flame View</span>
<span class="a t" style='left:12.31px;top:639px;line-height:18px;font-size:12px;letter-spacing:-0.421px;'>Stack Trace</span>
<span class="a t" style='left:686.31px;top:639px;line-height:18px;font-size:12px;letter-spacing:-0.307px;'>Samples</span>
<span class="a t" style='left:791.42px;top:639px;line-height:18px;font-size:12px;letter-spacing:-0.149px;'>Percentage</span>
<span class="a t" style='left:981.41px;top:610px;line-height:18px;font-size:12px;letter-spacing:-0.307px;'>Samples</span>
</body></html>
